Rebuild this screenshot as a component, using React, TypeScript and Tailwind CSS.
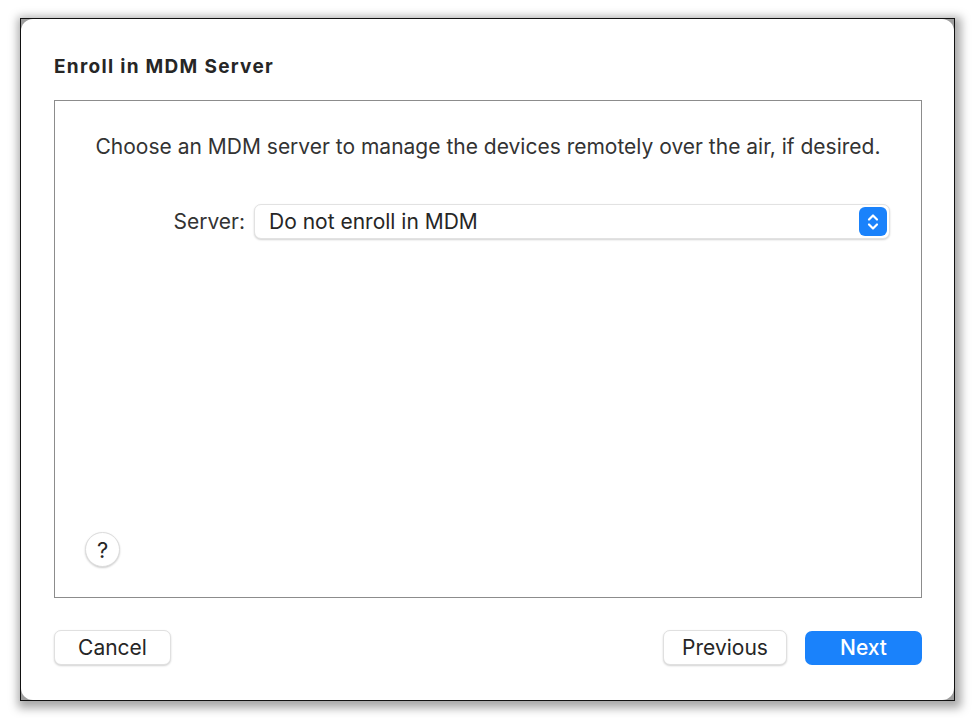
import React from 'react';

const font = { fontFamily: 'Inter, "Liberation Sans", Arial, sans-serif' };

const Stepper: React.FC = () => (
  <div className="w-[28px] h-[29px] rounded-[6px] bg-[#1a82fb] flex items-center justify-center">
    <svg width="14" height="20" viewBox="0 0 14 20" fill="none">
      <path d="M3 7.5 L7 3.5 L11 7.5" stroke="white" strokeWidth="2.2" strokeLinecap="round" strokeLinejoin="round" />
      <path d="M3 12.5 L7 16.5 L11 12.5" stroke="white" strokeWidth="2.2" strokeLinecap="round" strokeLinejoin="round" />
    </svg>
  </div>
);

export default function App() {
  return (
    <div className="w-[976px] h-[718px] bg-white pt-[18px] pl-[20px]" style={font}>
      {/* window frame with screenshot shadow */}
      <div className="w-[935px] h-[683px] border-[1.5px] border-[#111] bg-[#9e9e9e] shadow-[2px_3px_9px_4px_rgba(0,0,0,0.35)]">
        <div className="w-full h-full rounded-[12px] bg-white flex flex-col pl-[33px] pr-[32px] pt-[37px] pb-[32px]">
          <h1 className="text-[19px] leading-[22px] tracking-[1.3px] font-bold text-[#262626]">Enroll in MDM Server</h1>

          <div className="mt-[22px] h-[498px] border-[1.5px] border-[#8c8c8c] flex flex-col">
            <p className="pt-[34px] text-center text-[21px] leading-[24px] text-[#333]">
              Choose an MDM server to manage the devices remotely over the air, if desired.
            </p>

            <div className="mt-[45px] flex items-center justify-end pr-[31px]">
              <span className="text-[21px] leading-[24px] text-[#333]">Server:</span>
              <div className="ml-[9px] w-[636px] h-[35px] rounded-[7px] bg-white border border-[#e2e2e2] shadow-[0_1px_2px_rgba(0,0,0,0.18)] flex items-center justify-between pl-[14px] pr-[2px]">
                <span className="text-[21px] leading-[24px] text-[#262626]">Do not enroll in MDM</span>
                <Stepper />
              </div>
            </div>

            <div className="mt-auto pl-[30px] pb-[30px]">
              <button className="w-[35px] h-[35px] rounded-full bg-white border border-[#dcdcdc] shadow-[0_1px_2px_rgba(0,0,0,0.2)] flex items-center justify-center text-[22px] leading-none text-[#262626]">
                ?
              </button>
            </div>
          </div>

          <div className="mt-[32px] flex items-center">
            <button className="w-[117px] h-[35px] rounded-[7px] bg-white border border-[#e0e0e0] shadow-[0_1px_2px_rgba(0,0,0,0.18)] text-[21px] text-[#262626]">
              Cancel
            </button>
            <div className="ml-auto flex items-center gap-[18px]">
              <button className="w-[124px] h-[35px] rounded-[7px] bg-white border border-[#e0e0e0] shadow-[0_1px_2px_rgba(0,0,0,0.18)] text-[21px] text-[#262626]">
                Previous
              </button>
              <button className="w-[117px] h-[34px] rounded-[7px] bg-[#1a82fb] text-[21px] font-medium text-white">
                Next
              </button>
            </div>
          </div>
        </div>
      </div>
    </div>
  );
}
